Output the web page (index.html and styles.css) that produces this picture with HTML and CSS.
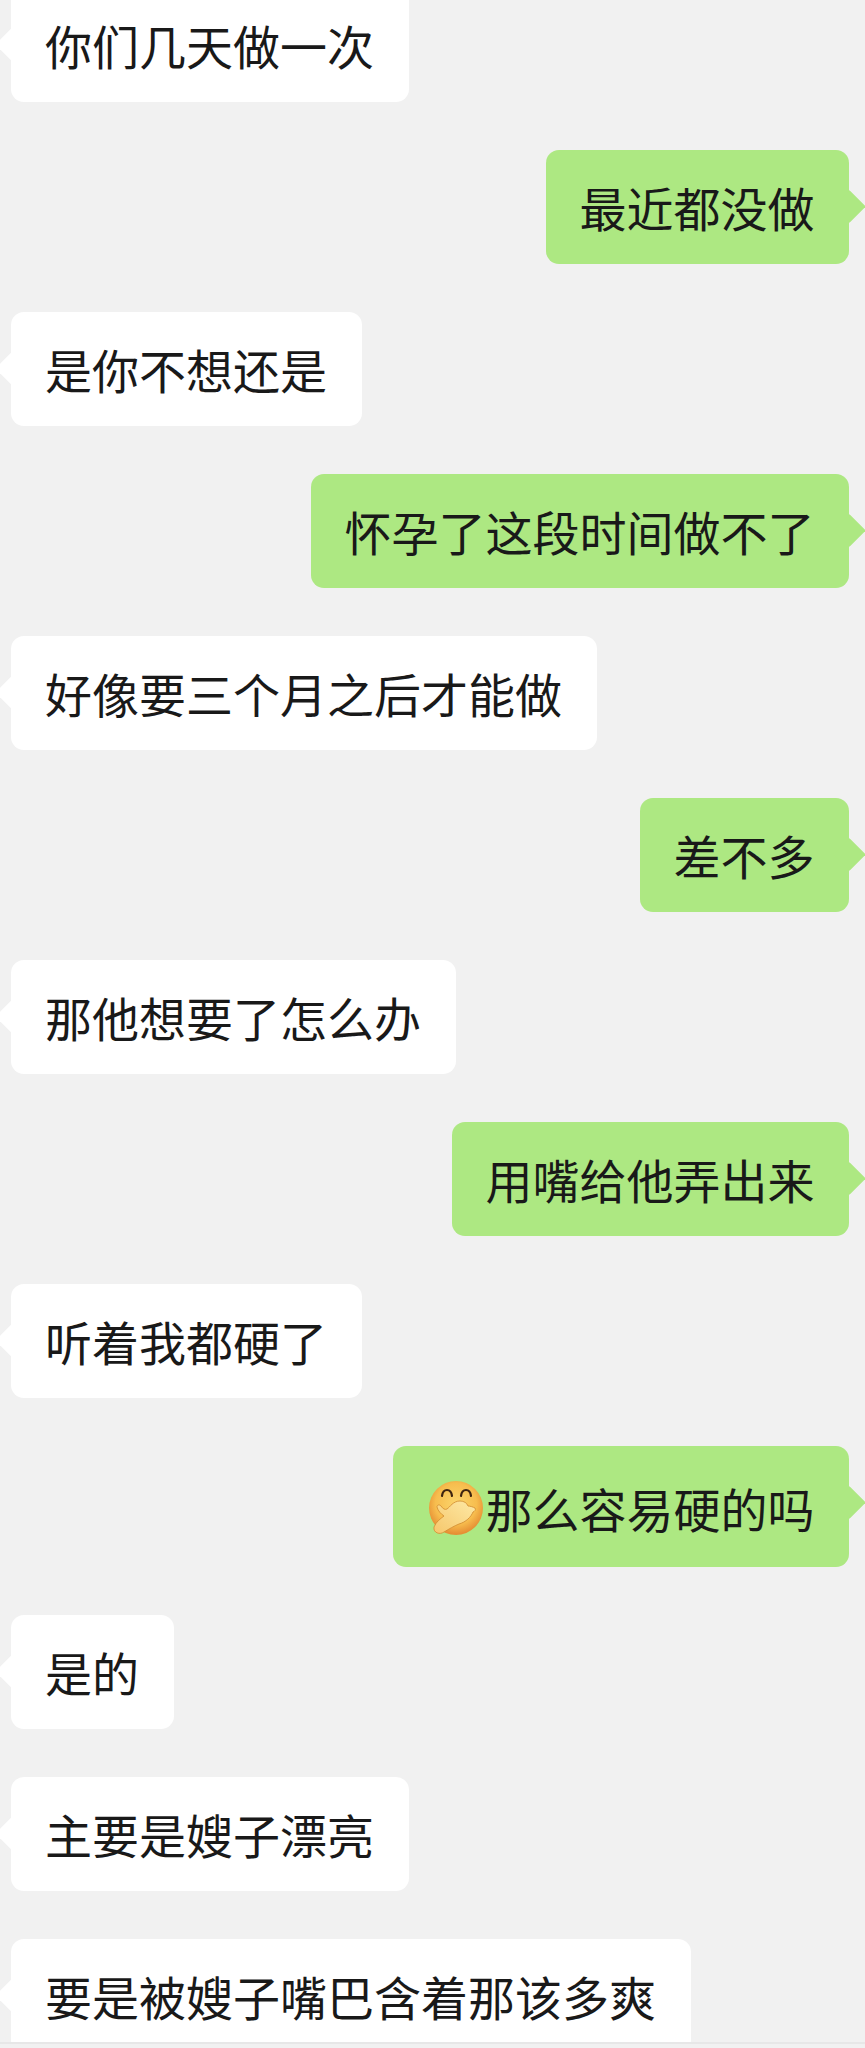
FILE: index.html
```html
<!DOCTYPE html>
<html lang="zh-CN">
<head>
	<meta charset="UTF-8">
	<title>聊天记录</title>
	<link rel="stylesheet" href="styles.css">
</head>
<body>
<div class="chat">
	<div class="msg in">你们几天做一次</div>
	<div class="msg out">最近都没做</div>
	<div class="msg in">是你不想还是</div>
	<div class="msg out">怀孕了这段时间做不了</div>
	<div class="msg in">好像要三个月之后才能做</div>
	<div class="msg out">差不多</div>
	<div class="msg in">那他想要了怎么办</div>
	<div class="msg out">用嘴给他弄出来</div>
	<div class="msg in">听着我都硬了</div>
	<div class="msg out tall">
		<svg class="emoji" viewBox="0 0 54 54" aria-hidden="true">
			<defs>
				<radialGradient id="face" cx="50%" cy="42%" r="56%">
					<stop offset="0" stop-color="#fbd56c"/>
					<stop offset="0.68" stop-color="#f7bd4e"/>
					<stop offset="1" stop-color="#e68f34"/>
				</radialGradient>
				<linearGradient id="hand" x1="0" y1="1" x2="1" y2="0">
					<stop offset="0" stop-color="#f6c76b"/>
					<stop offset="1" stop-color="#fde9a6"/>
				</linearGradient>
			</defs>
			<circle cx="27" cy="27" r="27" fill="url(#face)"/>
			<path d="M13 15c1-8 9-8 10 0M32 15c1-8 9-8 10 0" fill="none" stroke="#3f2510" stroke-width="2.2" stroke-linecap="round"/>
			<path d="M5 46C7 41 11 38 15 35C12 33 9 30 8 26C8 24 10 23 12 25C14 28 16 29 18 28C21 26 24 20 31 20C35 20 38 22 39 25C41 25 44 26 46 27C47 29 46 30 44 31C42 36 37 41 30 43C25 45 20 48 15 51C11 54 4 52 5 46Z" fill="url(#hand)" stroke="#d08a30" stroke-width="0.8"/>
		</svg>那么容易硬的吗
	</div>
	<div class="msg in">是的</div>
	<div class="msg in">主要是嫂子漂亮</div>
	<div class="msg in">要是被嫂子嘴巴含着那该多爽</div>
</div>
<div class="strip"></div>
</body>
</html>
```

FILE: styles.css
```css
html, body {
	margin: 0;
	height: 100%;
}
body {
	background: #f1f1f1;
	color: #191919;
	font-family: "Noto Sans CJK SC", "Liberation Sans", sans-serif;
	display: flex;
	flex-direction: column;
}
.chat {
	flex: 1;
	min-height: 0;
	overflow: hidden;
	display: flex;
	flex-direction: column;
	gap: 48px;
	padding: 0 16px 0 11px;
	margin-top: -12px;
}
.msg {
	position: relative;
	flex: none;
	font-size: 47px;
	line-height: 60px;
	height: 60px;
	padding: 27px 35px 27px 34px;
	border-radius: 13px;
	white-space: nowrap;
	display: flex;
	align-items: center;
}
.msg::after {
	content: "";
	position: absolute;
	top: 45px;
	width: 23px;
	height: 23px;
	transform: rotate(45deg);
}
.in {
	align-self: flex-start;
	background: #fff;
}
.in::after {
	left: -11.5px;
	background: #fff;
}
.out {
	align-self: flex-end;
	background: #ade882;
	padding-left: 33.5px;
	padding-right: 34.5px;
}
.out::after {
	right: -11.5px;
	background: #ade882;
}
.msg.tall {
	padding-top: 32px;
	padding-bottom: 29px;
	padding-left: 36px;
}
.emoji {
	width: 54px;
	height: 54px;
	margin-right: 3px;
	flex: none;
}
.strip {
	flex: none;
	height: 4px;
	background: #f1f1f1;
	border-top: 2px solid #e7e7e7;
}
```
